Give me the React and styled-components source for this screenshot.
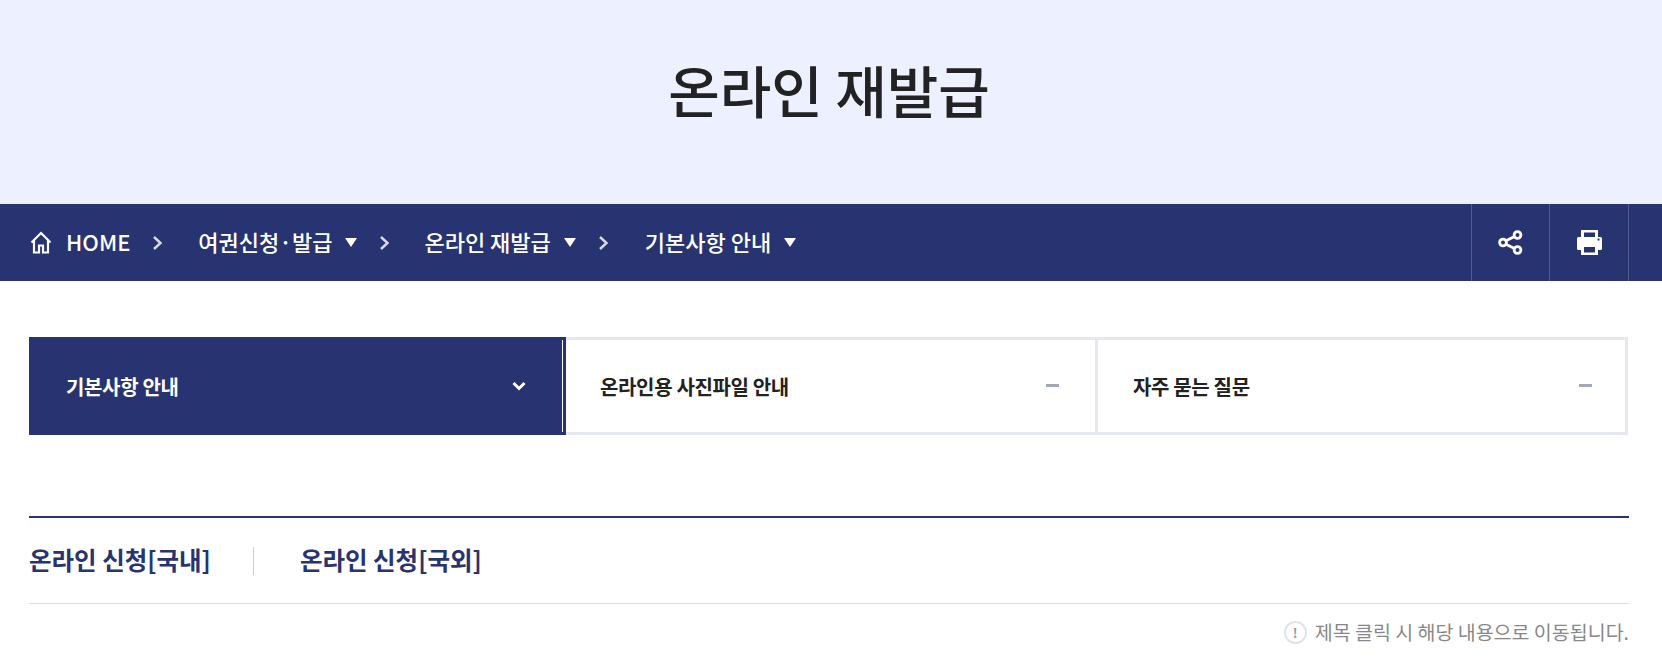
import React from 'react';
import styled, { createGlobalStyle } from 'styled-components';

const navy = '#283371';

const GlobalStyle = createGlobalStyle`
  html, body {
    margin: 0;
    padding: 0;
    background: #fff;
    font-family: "Noto Sans CJK KR", "Noto Sans", sans-serif;
  }
  * { box-sizing: border-box; }
`;

const Hero = styled.header`
  height: 204px;
  background: #edf0ff;
  display: flex;
  align-items: center;
  justify-content: center;
  padding: 0 4px 26px 0;
`;

const HeroTitle = styled.h1`
  margin: 0;
  font-size: 56px;
  font-weight: 500;
  line-height: 1.2;
  color: #222;
`;

const NavBar = styled.nav`
  height: 77px;
  background: ${navy};
  display: flex;
  align-items: center;
  justify-content: space-between;
  padding: 0 33px 0 30px;
`;

const Breadcrumb = styled.ol`
  list-style: none;
  margin: 0;
  padding: 0;
  display: flex;
  align-items: center;
`;

const Crumb = styled.li`
  display: flex;
  align-items: center;
  padding-bottom: 3px;
  color: #fff;
  font-size: 22px;
  font-weight: 500;
  line-height: 1;
  white-space: nowrap;
`;

const HomeLabel = styled.span`
  margin-left: 14px;
`;

const HomeGlyph = styled.svg`
  margin-top: 3px;
`;

const Caret = styled.span`
  width: 0;
  height: 0;
  margin: 3px 0 0 13px;
  border-left: 6.5px solid transparent;
  border-right: 6.5px solid transparent;
  border-top: 9px solid #fff;
`;

const Separator = styled.svg`
  width: 11px;
  height: 16px;
  margin: 0 ${(p) => p.$after}px 0 ${(p) => p.$before}px;
  fill: none;
  stroke: #d8dbe8;
  stroke-width: 2.4;
`;

const Tools = styled.div`
  display: flex;
  align-self: stretch;
  border-left: 1px solid #535b8c;
`;

const ToolButton = styled.button`
  width: ${(p) => p.$width}px;
  padding: 0;
  border: 0;
  border-right: 1px solid #535b8c;
  background: none;
  display: flex;
  align-items: center;
  justify-content: center;
`;

const Main = styled.main`
  padding: 0 33px 0 29px;
`;

const Tabs = styled.div`
  margin-top: 56px;
  display: grid;
  grid-template-columns: 537px 532px 530px;
`;

const Tab = styled.a`
  height: 98px;
  display: flex;
  align-items: center;
  justify-content: space-between;
  font-size: 20px;
  font-weight: 700;
  letter-spacing: -0.35px;
  color: ${(p) => (p.$active ? '#fff' : '#222')};
  background: ${(p) => (p.$active ? navy : '#fff')};
  border: 3px solid ${(p) => (p.$active ? navy : '#e5e8ec')};
  border-left-width: ${(p) => (p.$active ? 3 : 0)}px;
  padding: ${(p) => (p.$last ? '0 33px 0 35px' : p.$active ? '0 37px 0 34px' : '0 36px 0 34px')};
  position: relative;
`;

const ActiveEdge = styled.span`
  position: absolute;
  top: 0;
  bottom: 0;
  right: 0;
  width: 1px;
  background: #fff;
`;

const Dash = styled.span`
  width: 13px;
  height: 3px;
  margin-top: -2px;
  background: #a4a9b8;
`;

const ListSection = styled.section`
  margin-top: 81px;
  height: 88px;
  border-top: 2px solid ${navy};
  border-bottom: 1px solid #ddd;
  display: flex;
  align-items: center;
`;

const SectionLink = styled.a`
  font-size: 24.5px;
  font-weight: 700;
  line-height: 1;
  color: ${navy};
`;

const Divider = styled.span`
  width: 1px;
  height: 28px;
  margin: 0 46px 0 42px;
  background: #ccc;
`;

const Notice = styled.p`
  margin: 15px 0 0;
  display: flex;
  align-items: center;
  justify-content: flex-end;
  gap: 8px;
  font-size: 19.5px;
  line-height: 26px;
  color: #888;
`;

const NoticeIcon = styled.span`
  width: 23px;
  height: 23px;
  border: 2.5px solid #dfe3ea;
  border-radius: 50%;
  display: flex;
  align-items: center;
  justify-content: center;
  font-size: 13px;
  font-weight: 700;
  line-height: 1;
  color: #999;
`;

const HomeIcon = () => (
  <HomeGlyph width="22" height="23" viewBox="0 0 22 23" fill="none" stroke="#fff" strokeWidth="2.200">
    <path d="M1.500 11.500 11 2l9.500 9.500M4 9.500V21.500h5v-7h4v7h5V9.500" />
  </HomeGlyph>
);

const ShareIcon = () => (
  <svg width="25" height="25" viewBox="0 0 25 25" fill="none" stroke="#fff" strokeWidth="2.800">
    <circle cx="5" cy="12.500" r="3.400" />
    <circle cx="19.500" cy="5" r="3.400" />
    <circle cx="19.500" cy="20" r="3.400" />
    <path d="M8 10.800l8.500-4.300M8 14.200l8.500 4.300" />
  </svg>
);

const PrintIcon = () => (
  <svg width="25" height="25" viewBox="0 0 25 25" fill="#fff">
    <path
      fillRule="evenodd"
      d="M4 0h17v7h2.500A1.500 1.500 0 0 1 25 8.500V18.500a1.500 1.500 0 0 1-1.500 1.500H21v5H4v-5H1.500A1.500 1.500 0 0 1 0 18.500V8.500A1.500 1.500 0 0 1 1.500 7H4zM7 2.500V7h11V2.500zM7 17V22.500h11V17zM20.500 8.500v2h2v-2z"
    />
  </svg>
);

const ChevronRight = ({ before, after }) => (
  <Separator $before={before} $after={after} viewBox="0 0 11 16">
    <path d="M2 2l6.500 6L2 14" />
  </Separator>
);

const ChevronDown = () => (
  <svg width="14" height="10" viewBox="0 0 14 10" fill="none" stroke="#fff" strokeWidth="3">
    <path d="M1.500 2 7 7.500 12.500 2" />
  </svg>
);

export default function App() {
  return (
    <>
      <GlobalStyle />
      <Hero>
        <HeroTitle>온라인 재발급</HeroTitle>
      </Hero>
      <NavBar>
        <Breadcrumb>
          <Crumb>
            <HomeIcon />
            <HomeLabel>HOME</HomeLabel>
          </Crumb>
          <ChevronRight before={22} after={35} />
          <Crumb>
            여권신청·발급
            <Caret />
          </Crumb>
          <ChevronRight before={22} after={34} />
          <Crumb>
            온라인 재발급
            <Caret />
          </Crumb>
          <ChevronRight before={22} after={36} />
          <Crumb>
            기본사항 안내
            <Caret />
          </Crumb>
        </Breadcrumb>
        <Tools>
          <ToolButton $width={78}>
            <ShareIcon />
          </ToolButton>
          <ToolButton $width={79}>
            <PrintIcon />
          </ToolButton>
        </Tools>
      </NavBar>
      <Main>
        <Tabs>
          <Tab $active>
            기본사항 안내
            <ChevronDown />
            <ActiveEdge />
          </Tab>
          <Tab>
            온라인용 사진파일 안내
            <Dash />
          </Tab>
          <Tab $last>
            자주 묻는 질문
            <Dash />
          </Tab>
        </Tabs>
        <ListSection>
          <SectionLink>온라인 신청[국내]</SectionLink>
          <Divider />
          <SectionLink>온라인 신청[국외]</SectionLink>
        </ListSection>
        <Notice>
          <NoticeIcon>!</NoticeIcon>
          제목 클릭 시 해당 내용으로 이동됩니다.
        </Notice>
      </Main>
    </>
  );
}
